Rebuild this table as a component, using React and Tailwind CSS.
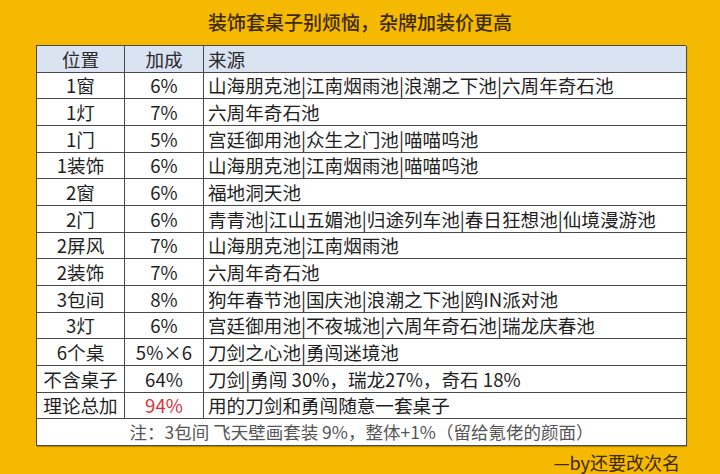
const rows = [
  ["1窗", "6%", "山海朋克池|江南烟雨池|浪潮之下池|六周年奇石池"],
  ["1灯", "7%", "六周年奇石池"],
  ["1门", "5%", "宫廷御用池|众生之门池|喵喵呜池"],
  ["1装饰", "6%", "山海朋克池|江南烟雨池|喵喵呜池"],
  ["2窗", "6%", "福地洞天池"],
  ["2门", "6%", "青青池|江山五媚池|归途列车池|春日狂想池|仙境漫游池"],
  ["2屏风", "7%", "山海朋克池|江南烟雨池"],
  ["2装饰", "7%", "六周年奇石池"],
  ["3包间", "8%", "狗年春节池|国庆池|浪潮之下池|鸥IN派对池"],
  ["3灯", "6%", "宫廷御用池|不夜城池|六周年奇石池|瑞龙庆春池"],
  ["6个桌", "5%×6", "刀剑之心池|勇闯迷境池"],
  ["不含桌子", "64%", "刀剑|勇闯 30%，瑞龙27%，奇石 18%"],
  ["理论总加", "94%", "用的刀剑和勇闯随意一套桌子", true],
];

const cell = "flex items-center border-r border-b border-[#4a4a4a]";

const App = () => {
  return (
    <div
      className="flex h-[474px] w-[720px] flex-col bg-[#f4b900] text-[18.6px]"
      style={{ fontFamily: '"Noto Sans CJK SC", "Noto Sans", sans-serif' }}
    >
      <h1 className="flex h-[48px] items-center justify-center pb-[1px] text-[19px] font-medium text-[#3e2a00]">
        装饰套桌子别烦恼，杂牌加装价更高
      </h1>
      <div className="ml-[36px] grid w-[650px] grid-cols-[88px_79px_483px] auto-rows-[26.67px] border-t border-l border-[#4a4a4a] bg-white leading-none text-[#1f1f1f] shadow-[1px_1px_1px_rgba(0,0,0,0.25)]">
        <div className={`${cell} justify-center bg-[#dae3f1] text-[#2a2a2a]`}>位置</div>
        <div className={`${cell} justify-center bg-[#dae3f1] text-[#2a2a2a]`}>加成</div>
        <div className={`${cell} bg-[#dae3f1] pl-[4px] text-[#2a2a2a]`}>来源</div>
        {rows.map(([pos, bonus, src, red]) => (
          <div key={pos} className="contents">
            <div className={`${cell} justify-center`}>{pos}</div>
            <div className={`${cell} justify-center ${red ? "text-[#d7323c]" : ""}`}>{bonus}</div>
            <div className={`${cell} pl-[4px]`}>{src}</div>
          </div>
        ))}
        <div className={`${cell} col-span-3 justify-center text-[17.5px] text-[#555]`}>
          注：3包间 飞天壁画套装 9%，整体+1%（留给氪佬的颜面）
        </div>
      </div>
      <div className="mr-[40px] mt-[4px] text-right text-[18px] leading-[24px] text-[#3e2a00]">
        —by还要改次名
      </div>
    </div>
  );
};

export default App;
